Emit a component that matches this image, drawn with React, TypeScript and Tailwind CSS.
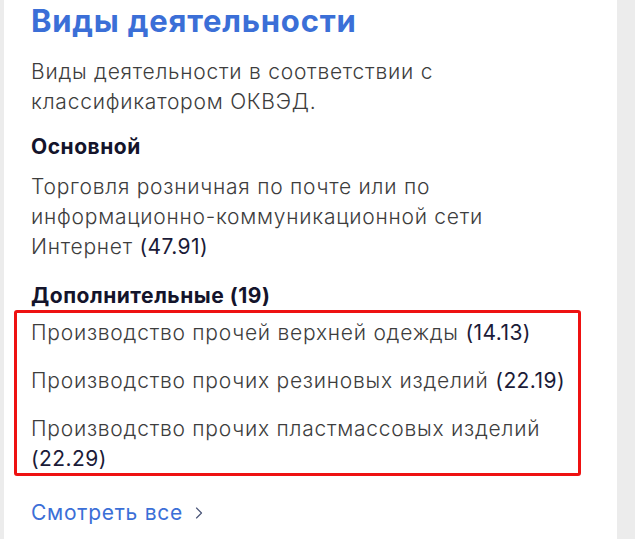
import { ChevronRight } from 'lucide-react'

const extra = [
  { name: 'Производство прочей верхней одежды', code: '14.13' },
  { name: 'Производство прочих резиновых изделий', code: '22.19' },
  { name: 'Производство прочих пластмассовых изделий', code: '22.29' },
]

function Activity({ name, code }: { name: string; code: string }) {
  return (
    <p className="text-[21px] leading-[30px] font-light tracking-[0.036em] text-[#3d3d3d]">
      {name} <span className="font-normal tracking-[0.02em] text-[#1b1b38]">({code})</span>
    </p>
  )
}

export default function App() {
  return (
    <div
      className="min-h-[539px] bg-[#ececec] pl-[4px] pr-[18px]"
      style={{ fontFamily: 'Inter, Roboto, sans-serif' }}
    >
      <div className="min-h-[539px] bg-white pt-[3px] pl-[27px] pr-[40px]">
        <div className="w-[546px]">
          <h2 className="text-[31px] leading-[36px] font-bold tracking-[0.025em] text-[#3b6fd7]">
            Виды деятельности
          </h2>

          <p className="mt-[18px] text-[21px] leading-[30px] font-light tracking-[0.036em] text-[#3d3d3d]">
            Виды деятельности в соответствии с классификатором ОКВЭД.
          </p>

          <h3 className="mt-[15px] text-[21px] leading-[30px] font-bold tracking-[0.025em] text-[#14142b]">
            Основной
          </h3>
          <div className="mt-[10px]">
            <Activity
              name="Торговля розничная по почте или по информационно-коммуникационной сети Интернет"
              code="47.91"
            />
          </div>

          <h3 className="mt-[19px] text-[21px] leading-[30px] font-bold tracking-[0.025em] text-[#14142b]">
            Дополнительные (19)
          </h3>

          <div className="relative mt-[7px] flex flex-col gap-[18px]">
            {extra.map(a => (
              <Activity key={a.code} name={a.name} code={a.code} />
            ))}
            <div className="pointer-events-none absolute -top-[8px] -bottom-[2px] -left-[17px] -right-[4px] rounded-[3px] border-[3px] border-[#ee1111]" />
          </div>

          <a
            href="#"
            className="mt-[24px] flex items-center gap-[6px] text-[21px] leading-[30px] tracking-[0.035em] text-[#3b6fd7]"
          >
            Смотреть все
            <ChevronRight className="h-[20px] w-[20px] text-[#4a5578]" strokeWidth={1.4} />
          </a>
        </div>
      </div>
    </div>
  )
}
